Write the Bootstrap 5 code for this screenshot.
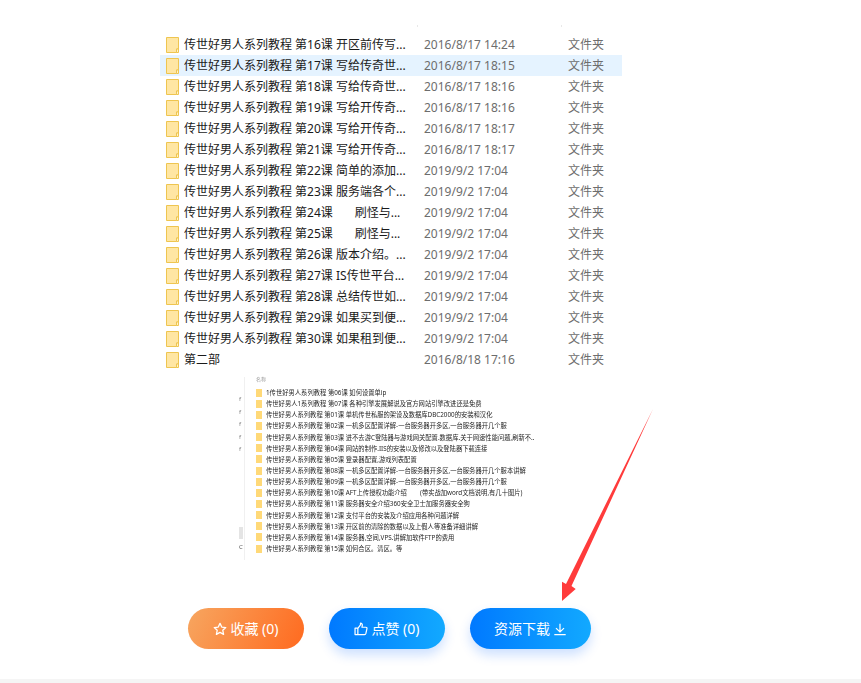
<!DOCTYPE html>
<html lang="zh-CN">
<head>
  <meta charset="utf-8">
  <title>资源详情</title>
  <link href="https://cdn.jsdelivr.net/npm/bootstrap@5.3.0/dist/css/bootstrap.min.css" rel="stylesheet">
  <style>
    body { background: #fff; font-family: "Noto Sans", "Noto Sans CJK SC", sans-serif; height: 683px; overflow: hidden; }
    .page-wrap { position: relative; height: 679px; padding-top: 25px; }
    .head-ticks { width: 462px; height: 2px; margin-left: 160px; padding-left: 257px; gap: 143px; }
    .head-ticks i { display: block; width: 1px; height: 2px; background: #e8e8e8; }
    .file-list { width: 462px; margin: 7px 0 0 160px; }
    .file-row { height: 21px; font-size: 12px; line-height: 21px; color: #1a1a1a; white-space: pre; }
    .file-row.active { background: #e5f3ff; }
    .file-ico { width: 13px; height: 16px; margin: 0 5px 0 6px; flex: none; }
    .file-name { width: 240px; flex: none; overflow: hidden; }
    .file-date { width: 144px; flex: none; color: #6d6d6d; }
    .file-kind { color: #6d6d6d; }
    .shot { margin: 7px 0 0 239px; height: 185px; filter: blur(.45px); }
    .shot-side { width: 5px; flex: none; color: #888; font-size: 6px; padding-top: 16px; line-height: 12.5px; }
    .shot-side .side-bar { width: 4px; height: 12px; background: #e4e4e4; margin-top: 71px; }
    .shot-side .side-c { line-height: 8px; margin-top: 4px; color: #555; }
    .shot-body { border-left: 1px solid #f0f0f0; padding: 0 0 0 11px; height: 183px; }
    .shot-top { height: 10px; font-size: 5px; line-height: 5px; color: #999; }
    .shot-row { height: 11.15px; line-height: 11.15px; font-size: 6.3px; color: #1f1f1f; white-space: pre; }
    .shot-ico { width: 6px; height: 8px; background: #ffd978; margin-right: 4px; flex: none; }
    .action-bar { gap: 25px; margin: 46px 0 0 188px; }
    .act-btn { height: 41px; width: 116px; border: 0; color: #fff; font-size: 14px; padding: 0; gap: 3px; }
    .act-btn:hover, .act-btn:active { color: #fff; }
    .act-btn svg { width: 14px; height: 14px; }
    .act-orange { background: linear-gradient(115deg, #f7a660, #ff6a1f); }
    .act-blue { background: linear-gradient(90deg, #0079ff, #12a9ff); box-shadow: 0 6px 12px rgba(0, 100, 255, .2); }
    .act-wide { width: 121px; }
    .arrow-mark { position: absolute; left: 0; top: 0; pointer-events: none; }
    .foot-band { height: 4px; background: #f5f5f5; }
  </style>
</head>
<body>
  <svg width="0" height="0" class="d-block">
    <symbol id="folder" viewBox="0 0 13 16">
      <path d="M.5 .5H12.5V12H10.5V15.5H.5Z" fill="#ffe6a3" stroke="#eec550"/>
      <path d="M10.5 15.5V12H12.5V15.5Z" fill="#fff3c9" stroke="#eec550"/>
    </symbol>
  </svg>

  <div class="page-wrap">
    <div class="head-ticks d-flex"><i></i><i></i></div>

    <div class="file-list">
      <div class="file-row d-flex align-items-center"><svg class="file-ico"><use href="#folder"/></svg><span class="file-name">传世好男人系列教程 第16课 开区前传写...</span><span class="file-date">2016/8/17 14:24</span><span class="file-kind">文件夹</span></div>
      <div class="file-row active d-flex align-items-center"><svg class="file-ico"><use href="#folder"/></svg><span class="file-name">传世好男人系列教程 第17课 写给传奇世...</span><span class="file-date">2016/8/17 18:15</span><span class="file-kind">文件夹</span></div>
      <div class="file-row d-flex align-items-center"><svg class="file-ico"><use href="#folder"/></svg><span class="file-name">传世好男人系列教程 第18课 写给传奇世...</span><span class="file-date">2016/8/17 18:16</span><span class="file-kind">文件夹</span></div>
      <div class="file-row d-flex align-items-center"><svg class="file-ico"><use href="#folder"/></svg><span class="file-name">传世好男人系列教程 第19课 写给开传奇...</span><span class="file-date">2016/8/17 18:16</span><span class="file-kind">文件夹</span></div>
      <div class="file-row d-flex align-items-center"><svg class="file-ico"><use href="#folder"/></svg><span class="file-name">传世好男人系列教程 第20课 写给开传奇...</span><span class="file-date">2016/8/17 18:17</span><span class="file-kind">文件夹</span></div>
      <div class="file-row d-flex align-items-center"><svg class="file-ico"><use href="#folder"/></svg><span class="file-name">传世好男人系列教程 第21课 写给开传奇...</span><span class="file-date">2016/8/17 18:17</span><span class="file-kind">文件夹</span></div>
      <div class="file-row d-flex align-items-center"><svg class="file-ico"><use href="#folder"/></svg><span class="file-name">传世好男人系列教程 第22课 简单的添加...</span><span class="file-date">2019/9/2 17:04</span><span class="file-kind">文件夹</span></div>
      <div class="file-row d-flex align-items-center"><svg class="file-ico"><use href="#folder"/></svg><span class="file-name">传世好男人系列教程 第23课 服务端各个...</span><span class="file-date">2019/9/2 17:04</span><span class="file-kind">文件夹</span></div>
      <div class="file-row d-flex align-items-center"><svg class="file-ico"><use href="#folder"/></svg><span class="file-name">传世好男人系列教程 第24课       刷怪与...</span><span class="file-date">2019/9/2 17:04</span><span class="file-kind">文件夹</span></div>
      <div class="file-row d-flex align-items-center"><svg class="file-ico"><use href="#folder"/></svg><span class="file-name">传世好男人系列教程 第25课       刷怪与...</span><span class="file-date">2019/9/2 17:04</span><span class="file-kind">文件夹</span></div>
      <div class="file-row d-flex align-items-center"><svg class="file-ico"><use href="#folder"/></svg><span class="file-name">传世好男人系列教程 第26课 版本介绍。...</span><span class="file-date">2019/9/2 17:04</span><span class="file-kind">文件夹</span></div>
      <div class="file-row d-flex align-items-center"><svg class="file-ico"><use href="#folder"/></svg><span class="file-name">传世好男人系列教程 第27课 IS传世平台...</span><span class="file-date">2019/9/2 17:04</span><span class="file-kind">文件夹</span></div>
      <div class="file-row d-flex align-items-center"><svg class="file-ico"><use href="#folder"/></svg><span class="file-name">传世好男人系列教程 第28课 总结传世如...</span><span class="file-date">2019/9/2 17:04</span><span class="file-kind">文件夹</span></div>
      <div class="file-row d-flex align-items-center"><svg class="file-ico"><use href="#folder"/></svg><span class="file-name">传世好男人系列教程 第29课 如果买到便...</span><span class="file-date">2019/9/2 17:04</span><span class="file-kind">文件夹</span></div>
      <div class="file-row d-flex align-items-center"><svg class="file-ico"><use href="#folder"/></svg><span class="file-name">传世好男人系列教程 第30课 如果租到便...</span><span class="file-date">2019/9/2 17:04</span><span class="file-kind">文件夹</span></div>
      <div class="file-row d-flex align-items-center"><svg class="file-ico"><use href="#folder"/></svg><span class="file-name">第二部</span><span class="file-date">2016/8/18 17:16</span><span class="file-kind">文件夹</span></div>
    </div>

    <div class="shot d-flex">
      <div class="shot-side">
        <div>f</div><div>f</div><div>f</div><div>f</div><div>f</div>
        <div class="side-bar"></div>
        <div class="side-c">C</div>
      </div>
      <div class="shot-body flex-grow-1">
        <div class="shot-top">名称</div>
        <div class="shot-row d-flex align-items-center"><span class="shot-ico"></span>1传世好男人系列教程 第06课 如何设置单ip</div>
        <div class="shot-row d-flex align-items-center"><span class="shot-ico"></span>传世好男人1系列教程 第07课 各种引擎发展解说及官方网站引擎改进还是免费</div>
        <div class="shot-row d-flex align-items-center"><span class="shot-ico"></span>传世好男人系列教程 第01课 单机传世私服的架设及数据库DBC2000的安装和汉化</div>
        <div class="shot-row d-flex align-items-center"><span class="shot-ico"></span>传世好男人系列教程 第02课 一机多区配置详解-一台服务器开多区,一台服务器开几个服</div>
        <div class="shot-row d-flex align-items-center"><span class="shot-ico"></span>传世好男人系列教程 第03课 进不去游C登陆器与游戏网关配置.数据库.关于网速性能问题,刷新不..</div>
        <div class="shot-row d-flex align-items-center"><span class="shot-ico"></span>传世好男人系列教程 第04课 网站的制作.IIS的安装以及修改以及登陆器下载连接</div>
        <div class="shot-row d-flex align-items-center"><span class="shot-ico"></span>传世好男人系列教程 第05课 登录器配置,游戏列表配置</div>
        <div class="shot-row d-flex align-items-center"><span class="shot-ico"></span>传世好男人系列教程 第08课 一机多区配置详解-一台服务器开多区,一台服务器开几个服本讲解</div>
        <div class="shot-row d-flex align-items-center"><span class="shot-ico"></span>传世好男人系列教程 第09课 一机多区配置详解-一台服务器开多区,一台服务器开几个服</div>
        <div class="shot-row d-flex align-items-center"><span class="shot-ico"></span>传世好男人系列教程 第10课 AFT上传授权功能介绍        (带实战加word文档说明,有几十图片)</div>
        <div class="shot-row d-flex align-items-center"><span class="shot-ico"></span>传世好男人系列教程 第11课 服务器安全介绍360安全卫士加服务器安全狗</div>
        <div class="shot-row d-flex align-items-center"><span class="shot-ico"></span>传世好男人系列教程 第12课 支付平台的安装及介绍应用各种问题详解</div>
        <div class="shot-row d-flex align-items-center"><span class="shot-ico"></span>传世好男人系列教程 第13课 开区前的清除的数据以及上假人等准备详细讲解</div>
        <div class="shot-row d-flex align-items-center"><span class="shot-ico"></span>传世好男人系列教程 第14课 服务器,空间,VPS.讲解加软件FTP的费用</div>
        <div class="shot-row d-flex align-items-center"><span class="shot-ico"></span>传世好男人系列教程 第15课 如何合区。清区。等</div>
      </div>
    </div>

    <div class="action-bar d-flex">
      <button type="button" class="btn act-btn act-orange rounded-pill d-flex align-items-center justify-content-center">
        <svg viewBox="0 0 16 16" fill="none" stroke="#fff" stroke-width="1.5" stroke-linejoin="round"><path d="M8 1.6 10 5.8 14.6 6.4 11.2 9.5 12.1 14.1 8 11.8 3.9 14.1 4.8 9.5 1.4 6.4 6 5.8Z"/></svg>
        收藏 (0)
      </button>
      <button type="button" class="btn act-btn act-blue rounded-pill d-flex align-items-center justify-content-center">
        <svg viewBox="0 0 16 16" fill="none" stroke="#fff" stroke-width="1.4" stroke-linejoin="round"><path d="M1.2 7H4.4V14.3H1.2ZM4.4 7.2 7.4 3.4V1.4C8.9 1.4 9.7 2.4 9.5 3.8L9.1 6H13.6C14.5 6 15 6.8 14.8 7.6L13.6 13.1C13.4 13.9 12.9 14.3 12.1 14.3H4.4"/></svg>
        点赞 (0)
      </button>
      <button type="button" class="btn act-btn act-blue act-wide rounded-pill d-flex align-items-center justify-content-center">
        资源下载
        <svg viewBox="0 0 16 16" fill="none" stroke="#fff" stroke-width="1.4"><path d="M8 2V11M3.4 7 8 11.4 12.6 7M1.5 14.4H14.5"/></svg>
      </button>
    </div>

    <svg class="arrow-mark" width="861" height="679"><polygon points="653,409 571.5,586 575.7,589 562,601 562,581.7 566,584" fill="#ff3b3b"/></svg>
  </div>
  <div class="foot-band"></div>

  <script src="https://cdn.jsdelivr.net/npm/bootstrap@5.3.0/dist/js/bootstrap.bundle.min.js"></script>
</body>
</html>
